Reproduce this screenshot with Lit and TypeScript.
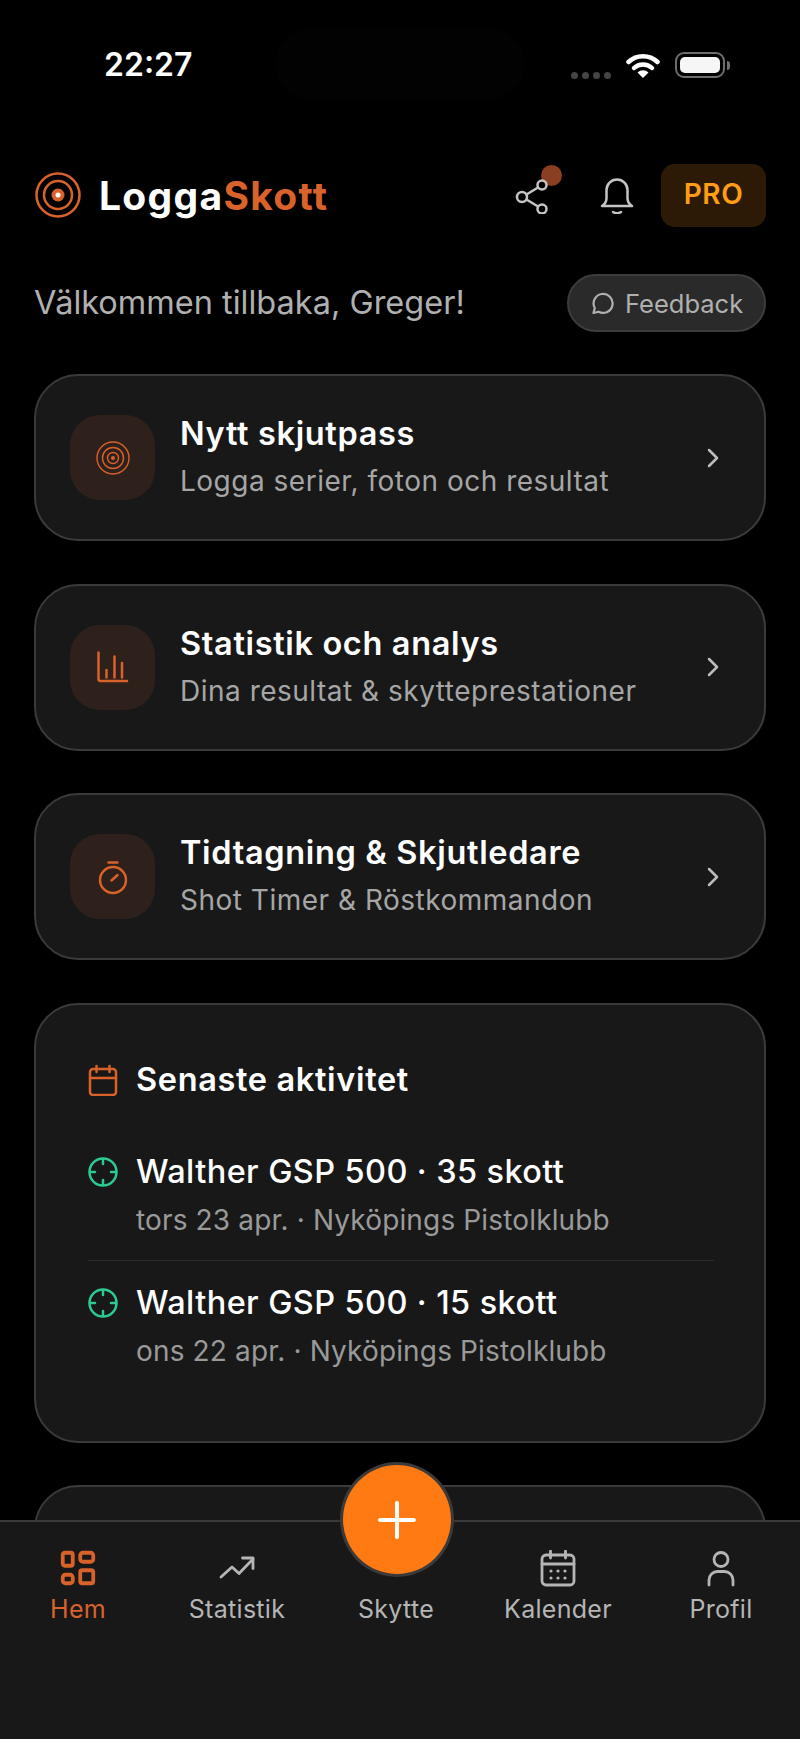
import { LitElement, html, css, svg } from 'lit';
import { customElement } from 'lit/decorators.js';

const actions = [
  {
    title: 'Nytt skjutpass',
    sub: 'Logga serier, foton och resultat',
    icon: svg`<circle cx="20" cy="20" r="16"/><circle cx="20" cy="20" r="10.500"/><circle cx="20" cy="20" r="5.500"/><circle cx="20" cy="20" r="2" fill="#d9622b" stroke="none"/>`,
    sw: 1.4,
  },
  {
    title: 'Statistik och analys',
    sub: 'Dina resultat & skytteprestationer',
    icon: svg`<path d="M5.500 5.500V32a2 2 0 0 0 2 2H34"/><path d="M13.500 23v7.500M21.500 9.500v21M29 16v14.500"/>`,
    sw: 2.5,
  },
  {
    title: 'Tidtagning & Skjutledare',
    sub: 'Shot Timer & Röstkommandon',
    icon: svg`<circle cx="20" cy="23" r="13"/><path d="M15.500 5.500h9M18.500 23.500l6-5.500"/>`,
    sw: 2.5,
  },
];

const activity = [
  { title: 'Walther GSP 500 · 35 skott', sub: 'tors 23 apr. · Nyköpings Pistolklubb' },
  { title: 'Walther GSP 500 · 15 skott', sub: 'ons 22 apr. · Nyköpings Pistolklubb' },
];

const tabs = [
  {
    label: 'Hem',
    active: true,
    sw: 3.8,
    icon: svg`<rect x="2.750" y="2.750" width="10" height="13" rx="2"/><rect x="20.250" y="2.750" width="13" height="9" rx="2.500"/><rect x="2.750" y="24.750" width="10" height="8.500" rx="2.500"/><rect x="20.250" y="20.250" width="13" height="13" rx="2"/>`,
  },
  {
    label: 'Statistik',
    sw: 2.8,
    icon: svg`<path d="M2 27l11-10 7 6.500L34 9"/><path d="M23.500 8H34v10.500"/>`,
  },
  { label: 'Skytte', icon: null, sw: 0 },
  {
    label: 'Kalender',
    sw: 2.8,
    icon: svg`<rect x="2" y="5" width="32" height="30" rx="4"/><path d="M2 14h32M10.500 1v7M25.500 1v7"/><g fill="currentColor" stroke="none"><circle cx="11" cy="21" r="1.600"/><circle cx="18" cy="21" r="1.600"/><circle cx="25" cy="21" r="1.600"/><circle cx="11" cy="28" r="1.600"/><circle cx="18" cy="28" r="1.600"/><circle cx="25" cy="28" r="1.600"/></g>`,
  },
  {
    label: 'Profil',
    sw: 2.8,
    icon: svg`<circle cx="18" cy="9.500" r="7"/><path d="M6 35v-5a8.500 8.500 0 0 1 8.500-8.500h7A8.500 8.500 0 0 1 30 30v5"/>`,
  },
];

@customElement('app-root')
export class AppRoot extends LitElement {
  static styles = css`
    :host {
      display: block;
      position: relative;
      width: 800px;
      height: 1739px;
      overflow: hidden;
      background: #000;
      color: #fff;
      font-family: Inter, 'Liberation Sans', sans-serif;
    }

    svg {
      display: block;
      fill: none;
      stroke: currentColor;
      stroke-linecap: round;
      stroke-linejoin: round;
    }

    .island {
      position: absolute;
      left: 275px;
      top: 28px;
      width: 250px;
      height: 72px;
      border-radius: 36px;
      background: #020202;
    }

    .status {
      position: relative;
      display: flex;
      align-items: center;
      height: 130px;
      padding: 0 70px 0 104px;
    }

    .time {
      font-size: 32px;
      font-weight: 600;
      line-height: 132px;
    }

    .status-right {
      display: flex;
      align-items: center;
      margin-left: auto;
    }

    .dots {
      display: flex;
      gap: 4px;
      margin: 20px 15px 0 0;
    }

    .dots i {
      width: 7px;
      height: 7px;
      border-radius: 50%;
      background: #444;
    }

    .battery {
      width: 50px;
      height: 26px;
      margin-left: 15px;
      padding: 3px;
      box-sizing: border-box;
      border: 2px solid #6d6d6d;
      border-radius: 9px;
    }

    .battery i {
      display: block;
      height: 100%;
      border-radius: 5px;
      background: #f6f6f6;
    }

    .nub {
      width: 3px;
      height: 9px;
      margin-left: 2px;
      border-radius: 0 3px 3px 0;
      background: #6d6d6d;
    }

    main {
      padding: 0 34px;
    }

    .header {
      display: flex;
      align-items: center;
      height: 130px;
    }

    .brand {
      display: flex;
      align-items: center;
      gap: 17px;
      font-size: 39px;
      font-weight: 700;
      letter-spacing: 1.3px;
    }

    .brand svg {
      color: #d9622b;
    }

    .brand b {
      font-weight: 700;
      color: #d9622b;
    }

    .header-right {
      display: flex;
      align-items: center;
      margin-left: auto;
    }

    .share {
      position: relative;
      color: #c4c4c4;
    }

    .share svg {
      position: relative;
      z-index: 1;
    }

    .badge {
      position: absolute;
      left: 26px;
      top: -11px;
      width: 21px;
      height: 21px;
      border-radius: 50%;
      background: #8a3f22;
    }

    .bell {
      margin-left: 49px;
      color: #c4c4c4;
    }

    .pro {
      display: flex;
      align-items: center;
      justify-content: center;
      width: 105px;
      height: 63px;
      padding-bottom: 3px;
      box-sizing: border-box;
      margin-left: 27px;
      border-radius: 14px;
      background: #2c1a07;
      color: #ff9d14;
      font-size: 28px;
      font-weight: 600;
      letter-spacing: 0.5px;
    }

    .welcome {
      display: flex;
      align-items: center;
      justify-content: space-between;
      height: 58px;
      margin: 14px 0 42px;
    }

    .welcome span {
      font-size: 32.500px;
      line-height: 56px;
      color: #b0b0b0;
    }

    .feedback {
      display: flex;
      align-items: center;
      gap: 11px;
      width: 199px;
      height: 58px;
      padding-left: 22px;
      box-sizing: border-box;
      border: 2px solid #3c3c3c;
      border-radius: 29px;
      background: #2a2a2a;
      color: #b0b0b0;
      font-size: 25.500px;
    }

    .card {
      box-sizing: border-box;
      border: 2px solid #3a3a3a;
      border-radius: 44px;
      background: #181818;
      margin-bottom: 42.500px;
    }

    .action {
      display: flex;
      align-items: center;
      gap: 25px;
      height: 167px;
      padding: 0 44px 0 34px;
    }

    .action-icon {
      display: flex;
      align-items: center;
      justify-content: center;
      flex: none;
      width: 85px;
      height: 85px;
      border-radius: 30px;
      background: #2e201a;
      color: #d9622b;
    }

    .action-text {
      flex: 1;
    }

    .action-title {
      font-size: 32.500px;
      font-weight: 600;
      letter-spacing: 0.65px;
      line-height: 40px;
    }

    .action-sub {
      margin-top: 7px;
      font-size: 28px;
      letter-spacing: 0.5px;
      line-height: 40px;
      color: #a6a6a6;
    }

    .chevron {
      color: #bdbdbd;
    }

    .activity {
      height: 440px;
      padding: 53px 50px 0 52px;
    }

    .activity-head {
      display: flex;
      align-items: center;
      gap: 18px;
      height: 44px;
      font-size: 32.500px;
      font-weight: 600;
      letter-spacing: 0.65px;
      margin-bottom: 48px;
    }

    .activity-head svg {
      color: #d9622b;
    }

    .row {
      display: grid;
      grid-template-columns: 30px 1fr;
      column-gap: 18px;
      align-items: center;
    }

    .row + .row {
      margin-top: 20px;
      padding-top: 20px;
      border-top: 1px solid #2c2c2c;
    }

    .row svg {
      color: #2ec990;
    }

    .row-title {
      font-size: 32.500px;
      font-weight: 500;
      letter-spacing: 0.4px;
      line-height: 44px;
    }

    .row-sub {
      grid-column: 2;
      margin-top: 6px;
      font-size: 28px;
      letter-spacing: 0.15px;
      line-height: 40px;
      color: #9a9a9a;
    }

    .tabbar {
      position: absolute;
      left: 0;
      right: 0;
      bottom: 0;
      height: 219px;
      box-sizing: border-box;
      border-top: 2px solid #3a3a3a;
      background: #181818;
      display: grid;
      grid-template-columns: 156px 162px 156px 168px 158px;
      color: #b5b5b5;
    }

    .tab {
      display: flex;
      flex-direction: column;
      align-items: center;
      padding-top: 28px;
      font-size: 25px;
      letter-spacing: 0.3px;
    }

    .tab.active {
      color: #d9622b;
    }

    .tab-icon {
      height: 37px;
    }

    .tab-label {
      margin-top: 5px;
      line-height: 34px;
    }

    .fab {
      position: absolute;
      left: 340px;
      top: 1462px;
      display: flex;
      align-items: center;
      justify-content: center;
      width: 114px;
      height: 115px;
      box-sizing: border-box;
      border: 3px solid #3a3a3a;
      border-radius: 50%;
      background: #ff7a12;
      color: #fff;
    }
  `;

  render() {
    return html`
      <div class="island"></div>
      <div class="status">
        <span class="time">22:27</span>
        <div class="status-right">
          <div class="dots"><i></i><i></i><i></i><i></i></div>
          <svg width="34" height="25" viewBox="0 0 34 25" stroke-width="4.500">
            <path d="M2.500 9a21 21 0 0 1 29 0"/>
            <path d="M8 15a13 13 0 0 1 18 0"/>
            <path d="M17 25l-5.500-5.500a8 8 0 0 1 11 0z" fill="currentColor" stroke="none"/>
          </svg>
          <div class="battery"><i></i></div>
          <div class="nub"></div>
        </div>
      </div>

      <main>
        <div class="header">
          <div class="brand">
            <svg width="48" height="48" viewBox="0 0 48 48" stroke-width="2.500">
              <circle cx="24" cy="24" r="21.500"/>
              <circle cx="24" cy="24" r="14"/>
              <circle cx="24" cy="24" r="6.500" fill="currentColor" stroke="none"/>
              <circle cx="24" cy="24" r="2.500" fill="#fff" stroke="none"/>
            </svg>
            <span>Logga<b>Skott</b></span>
          </div>
          <div class="header-right">
            <div class="share">
              <svg width="36" height="38" viewBox="0 0 36 38" stroke-width="2.500">
                <circle cx="7" cy="21" r="5"/>
                <circle cx="27" cy="9" r="4.500"/>
                <circle cx="27" cy="33" r="4.500"/>
                <path d="M11.500 18.500l11.500-7M11.500 23.500l11.500 7"/>
              </svg>
              <div class="badge"></div>
            </div>
            <svg class="bell" width="34" height="38" viewBox="0 0 34 38" stroke-width="2.500">
              <path d="M2 30c2.500-1.500 4.500-4 4.500-8v-8a10.500 10.500 0 0 1 21 0v8c0 4 2 6.500 4.500 8z"/>
              <path d="M13 36c2 1.500 6 1.500 8 0"/>
            </svg>
            <div class="pro">PRO</div>
          </div>
        </div>

        <div class="welcome">
          <span>Välkommen tillbaka, Greger!</span>
          <div class="feedback">
            <svg width="23" height="23" viewBox="0 0 23 23" stroke-width="2.200">
              <path d="M2.500 21l1.300-5a9.500 9.500 0 1 1 3.700 3.700z"/>
            </svg>
            Feedback
          </div>
        </div>

        ${actions.map(
          (a) => html`
            <div class="card action">
              <div class="action-icon">
                <svg width="40" height="40" viewBox="0 0 40 40" stroke-width=${a.sw}>${a.icon}</svg>
              </div>
              <div class="action-text">
                <div class="action-title">${a.title}</div>
                <div class="action-sub">${a.sub}</div>
              </div>
              <svg class="chevron" width="14" height="22" viewBox="0 0 14 22" stroke-width="2.500">
                <path d="M3 3l8 8-8 8"/>
              </svg>
            </div>
          `
        )}

        <div class="card activity">
          <div class="activity-head">
            <svg width="30" height="32" viewBox="0 0 30 32" stroke-width="2.500">
              <rect x="2" y="5" width="26" height="26" rx="3"/>
              <path d="M2 14h26M8.500 2v6M21.500 2v6"/>
            </svg>
            Senaste aktivitet
          </div>
          ${activity.map(
            (r) => html`
              <div class="row">
                <svg width="30" height="30" viewBox="0 0 30 30" stroke-width="2.500">
                  <circle cx="15" cy="15" r="13.500"/>
                  <path d="M15 2v5M15 23v5M2 15h5M23 15h5"/>
                </svg>
                <div class="row-title">${r.title}</div>
                <div class="row-sub">${r.sub}</div>
              </div>
            `
          )}
        </div>

        <div class="card" style="height: 120px"></div>
      </main>

      <nav class="tabbar">
        ${tabs.map(
          (t) => html`
            <div class="tab ${t.active ? 'active' : ''}">
              <div class="tab-icon">
                ${t.icon
                  ? html`<svg width="36" height="37" viewBox="0 0 36 37" stroke-width=${t.sw}>${t.icon}</svg>`
                  : ''}
              </div>
              <div class="tab-label">${t.label}</div>
            </div>
          `
        )}
      </nav>
      <div class="fab">
        <svg width="38" height="38" viewBox="0 0 38 38" stroke-width="4">
          <path d="M19 2v34M2 19h34"/>
        </svg>
      </div>
    `;
  }
}
